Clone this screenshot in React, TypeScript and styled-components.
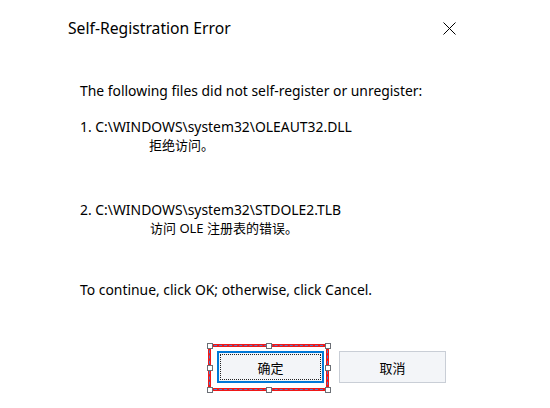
import React from "react";
import styled, { createGlobalStyle } from "styled-components";

const Global = createGlobalStyle`
  html, body { margin: 0; padding: 0; background: #ffffff; }
  body { font-family: "Noto Sans", "Noto Sans CJK SC", sans-serif; color: #000; }
`;

const Dialog = styled.div`
  width: 550px;
  height: 408px;
  background: #ffffff;
  display: flex;
  flex-direction: column;
  position: relative;
  overflow: hidden;
`;

const TitleBar = styled.div`
  display: flex;
  align-items: center;
  justify-content: space-between;
  height: 20px;
  margin-top: 18px;
  padding: 0 94px 0 68px;
`;

const Title = styled.div`
  font-size: 15.7px;
  line-height: 20px;
  color: #000;
`;

const CloseBtn = styled.div`
  width: 14px;
  height: 14px;
  display: flex;
  align-items: center;
  justify-content: center;
`;

const Body = styled.div`
  display: flex;
  flex-direction: column;
  padding-left: 80px;
  margin-top: 44px;
  font-size: 13.9px;
  line-height: 18px;
`;

const Line = styled.div<{ $gap?: number; $indent?: number }>`
  margin-top: ${(p) => p.$gap ?? 0}px;
  padding-left: ${(p) => p.$indent ?? 0}px;
  white-space: pre;
`;

const Cjk = styled(Line)`
  font-family: "Noto Sans", "Noto Sans CJK SC", sans-serif;
  font-size: 13px;
`;

const Buttons = styled.div`
  display: flex;
  justify-content: flex-end;
  gap: 15px;
  padding-right: 104px;
  margin-top: 52px;
`;

const Button = styled.div<{ $focused?: boolean }>`
  position: relative;
  box-sizing: border-box;
  width: 107px;
  height: 32px;
  display: flex;
  align-items: center;
  justify-content: center;
  font-family: "Noto Sans CJK SC", sans-serif;
  font-size: 13px;
  background: #f3f5f8;
  border: ${(p) => (p.$focused ? "2px solid #0078d7" : "1px solid #c9ced6")};
`;

const FocusRing = styled.div`
  position: absolute;
  inset: 1px;
  border: 1px dotted #222;
  pointer-events: none;
`;

const Selection = styled.div`
  position: absolute;
  left: -11px;
  right: -7px;
  top: -9px;
  bottom: -10px;
  border: 3px solid #f01818;
  pointer-events: none;
`;

const SelectionDash = styled.div`
  position: absolute;
  inset: -2px;
  border: 1px dashed #4a7fd0;
`;

const HandleLayer = styled.div`
  position: absolute;
  inset: -1.5px;
`;

const Handle = styled.div`
  position: absolute;
  width: 4px;
  height: 4px;
  background: #ffffff;
  border: 1px solid #6b6f75;
  transform: translate(-50%, -50%);
`;

const handles: [string, string][] = [
  ["0%", "0%"], ["50%", "0%"], ["100%", "0%"],
  ["0%", "50%"], ["100%", "50%"],
  ["0%", "100%"], ["50%", "100%"], ["100%", "100%"],
];

export default function App() {
  return (
    <>
      <Global />
      <Dialog>
        <TitleBar>
          <Title>Self-Registration Error</Title>
          <CloseBtn>
            <svg width="13" height="13" viewBox="0 0 13 13">
              <path d="M0.5 0.5 L12.5 12.5 M12.5 0.5 L0.5 12.5" stroke="#000" strokeWidth="1" fill="none" />
            </svg>
          </CloseBtn>
        </TitleBar>
        <Body>
          <Line>The following files did not self-register or unregister:</Line>
          <Line $gap={18}>1. C:\WINDOWS\system32\OLEAUT32.DLL</Line>
          <Cjk $indent={69}>拒绝访问。</Cjk>
          <Line $gap={47}>2. C:\WINDOWS\system32\STDOLE2.TLB</Line>
          <Cjk $indent={70}>访问 OLE 注册表的错误。</Cjk>
          <Line $gap={44}>To continue, click OK; otherwise, click Cancel.</Line>
        </Body>
        <Buttons>
          <Button $focused>
            <FocusRing />
            确定
            <Selection>
              <SelectionDash />
              <HandleLayer>
                {handles.map(([l, t], i) => (
                  <Handle key={i} style={{ left: l, top: t }} />
                ))}
              </HandleLayer>
            </Selection>
          </Button>
          <Button>取消</Button>
        </Buttons>
      </Dialog>
    </>
  );
}
